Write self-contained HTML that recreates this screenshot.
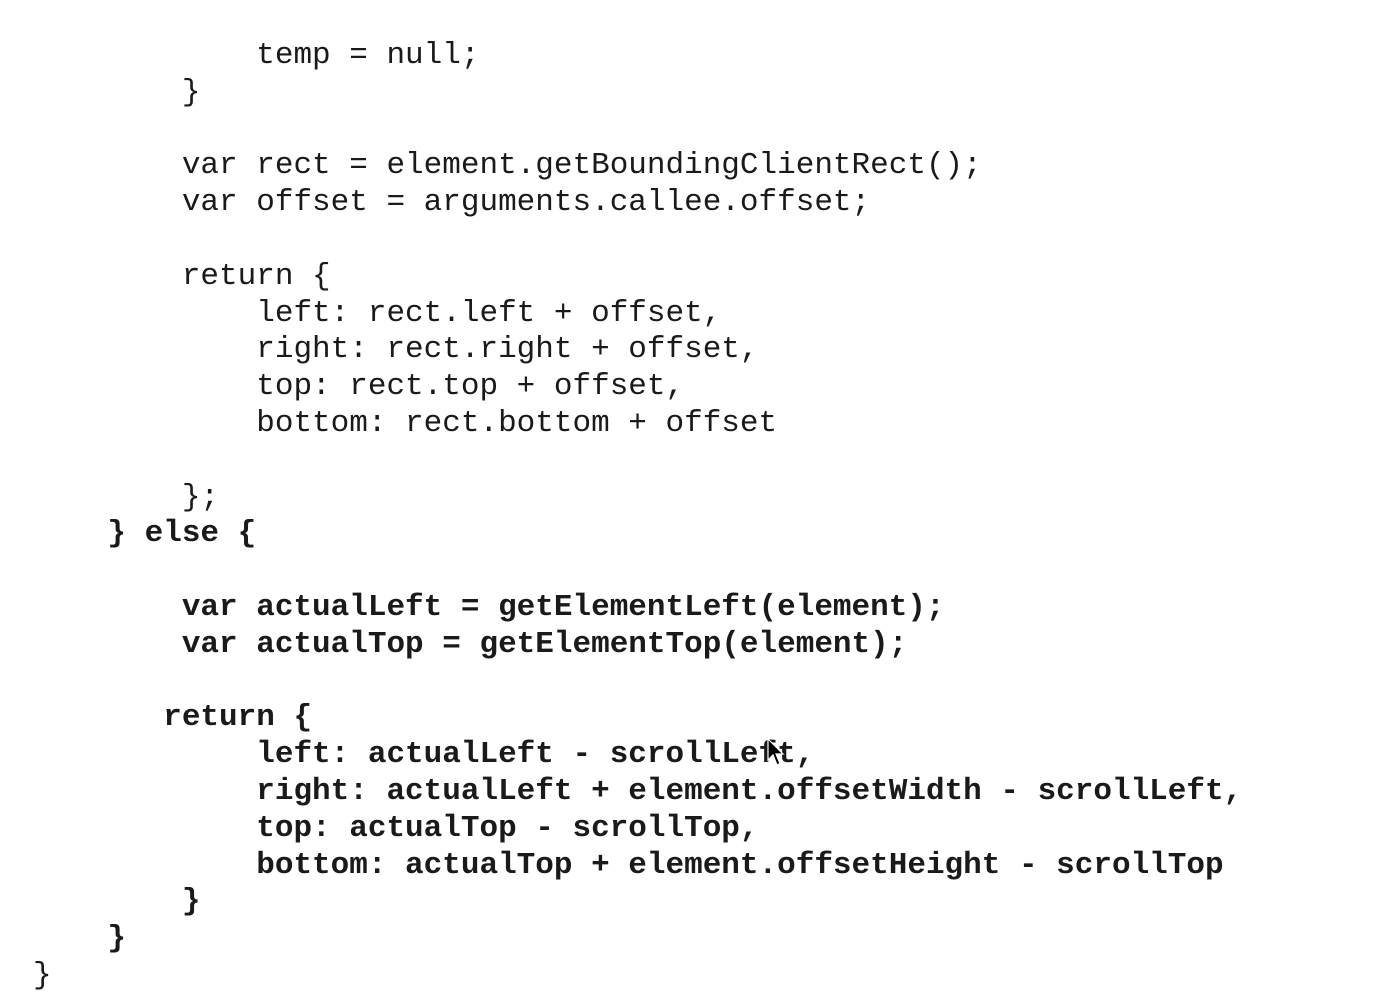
<!DOCTYPE html>
<html><head><style>
html,body{margin:0;padding:0;background:#fff;width:1398px;height:1002px;overflow:hidden}
pre{position:absolute;left:33px;top:38px;margin:0;font-family:"Liberation Mono",monospace;font-size:31px;line-height:36.8px;color:#1a1a1a}
b{font-weight:bold}
.cur{position:absolute;left:767px;top:738px}
</style></head><body>
<pre>            temp = null;
        }

        var rect = element.getBoundingClientRect();
        var offset = arguments.callee.offset;

        return {
            left: rect.left + offset,
            right: rect.right + offset,
            top: rect.top + offset,
            bottom: rect.bottom + offset

        };
<b>    } else {

        var actualLeft = getElementLeft(element);
        var actualTop = getElementTop(element);

       return {
            left: actualLeft - scrollLeft,
            right: actualLeft + element.offsetWidth - scrollLeft,
            top: actualTop - scrollTop,
            bottom: actualTop + element.offsetHeight - scrollTop
        }
    }</b>
}</pre>
<svg class="cur" width="20" height="30" viewBox="0 0 20 30"><path d="M1 1 L1 22 L6 17 L10 27 L13 25.5 L9 16 L16 16 Z" fill="#000" stroke="#fff" stroke-width="1.2"/></svg>
</body></html>
